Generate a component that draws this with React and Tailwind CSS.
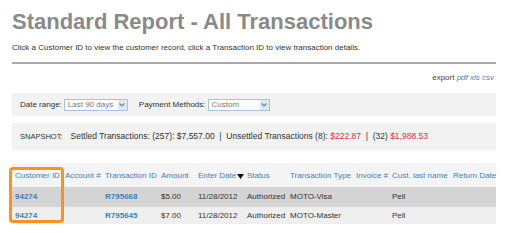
export default function App() {
  const cols = 'grid grid-cols-[50px_40px_56px_37px_49px_43px_66px_36px_61px_1fr] pl-[3px]'
  const rows = [
    { id: '94274', tx: 'R795668', amt: '$5.00', type: 'MOTO-Visa', bg: 'bg-[#d4d4d4]' },
    { id: '94274', tx: 'R795645', amt: '$7.00', type: 'MOTO-Master', bg: 'bg-[#efefef]' },
  ]
  return (
    <div
      className="w-[506px] h-[233px] overflow-hidden bg-white pl-[12px] pr-[10px] text-[#333]"
      style={{ fontFamily: '"Liberation Sans", Arial, sans-serif' }}
    >
      <h1 className="pt-[8px] text-[22px] leading-[28px] font-bold text-[#8a8a8a]">
        Standard Report - All Transactions
      </h1>
      <p className="mt-[6px] text-[8px] leading-[12px]">
        Click a Customer ID to view the customer record, click a Transaction ID to view transaction details.
      </p>
      <div className="mt-[8px] h-[2px] bg-[#a9a9a9]" />
      <div className="mt-[9px] pr-[2px] text-right text-[8px] leading-[10px] text-[#444]">
        export{' '}
        <span className="italic text-[#3f7fbf]">pdf xls csv</span>
      </div>

      <div className="mt-[10px] h-[23px] bg-[#f2f2f2] flex items-center pl-[8px] text-[8px]">
        <span>Date range:</span>
        <div className="ml-[2px] w-[64px] h-[12px] bg-white border border-[#a9c1e2] flex items-center justify-between pl-[3px] text-[#777]">
          <span>Last 90 days</span>
          <span className="w-[9px] h-[10px] bg-[#dfe8f5] flex items-center justify-center">
            <svg width="6" height="4" viewBox="0 0 6 4"><path d="M0.5 0.5 L3 3 L5.5 0.5" fill="none" stroke="#5a7fb5" strokeWidth="1.2" /></svg>
          </span>
        </div>
        <span className="ml-[11px]">Payment Methods:</span>
        <div className="ml-[2px] w-[62px] h-[12px] bg-white border border-[#a9c1e2] flex items-center justify-between pl-[3px] text-[#777]">
          <span>Custom</span>
          <span className="w-[9px] h-[10px] bg-[#dfe8f5] flex items-center justify-center">
            <svg width="6" height="4" viewBox="0 0 6 4"><path d="M0.5 0.5 L3 3 L5.5 0.5" fill="none" stroke="#5a7fb5" strokeWidth="1.2" /></svg>
          </span>
        </div>
      </div>

      <div className="mt-[7px] h-[27px] bg-[#f2f2f2] flex items-center pl-[8px] text-[8.5px] whitespace-nowrap">
        <span className="text-[7.5px] mr-[8px]">SNAPSHOT:</span>
        <span>
          Settled Transactions: (257): $7,557.00 &nbsp;|&nbsp; Unsettled Transactions (8):{' '}
          <span className="text-[#e0323c]">$222.87</span> &nbsp;|&nbsp; (32){' '}
          <span className="text-[#e0323c]">$1,988.53</span>
        </span>
      </div>

      <div className="relative mt-[13px] text-[8px] whitespace-nowrap">
        <div className={`${cols} h-[24px] items-end pb-[5px] bg-[#f4f4f4] text-[#3f7fbf]`}>
          <span>Customer ID</span>
          <span>Account #</span>
          <span>Transaction ID</span>
          <span>Amount</span>
          <span className="flex items-center gap-[1px]">
            Enter Date
            <svg width="7" height="5" viewBox="0 0 7 5"><path d="M0 0 H7 L3.5 5 Z" fill="#111" /></svg>
          </span>
          <span>Status</span>
          <span>Transaction Type</span>
          <span>Invoice #</span>
          <span>Cust. last name</span>
          <span>Return Date</span>
        </div>
        {rows.map((r, i) => (
          <div key={i} className={`${cols} ${i === 0 ? 'h-[20px]' : 'h-[17px]'} items-center ${r.bg}`}>
            <span className="font-bold text-[#3f7fbf]">{r.id}</span>
            <span />
            <span className="font-bold text-[#3f7fbf]">{r.tx}</span>
            <span>{r.amt}</span>
            <span>11/28/2012</span>
            <span>Authorized</span>
            <span>{r.type}</span>
            <span />
            <span>Pell</span>
            <span />
          </div>
        ))}
        <div className="absolute left-[-3px] top-[4px] w-[55px] h-[56px] border-[3px] border-[#f7931e] rounded-[4px]" />
      </div>
    </div>
  )
}
